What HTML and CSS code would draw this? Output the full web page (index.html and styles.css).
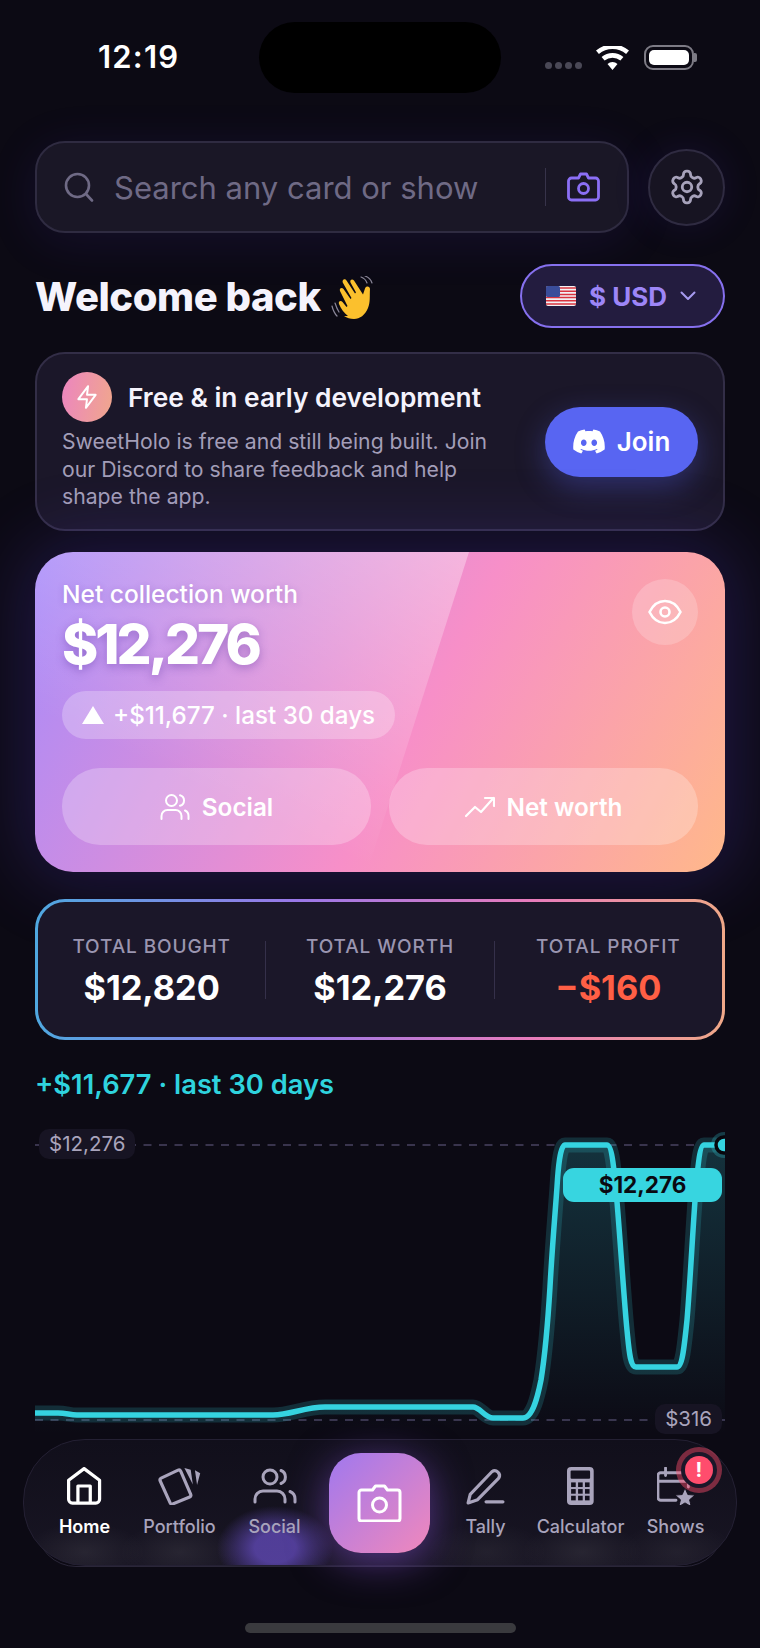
FILE: index.html
```html
<!DOCTYPE html>
<html lang="en">
<head>
    <meta charset="UTF-8">
    <title>SweetHolo</title>
    <link rel="stylesheet" href="styles.css">
</head>
<body>
<div class="page">

    <div class="status">
        <div class="time">12:19</div>
        <div class="island"></div>
        <div class="status-icons">
            <div class="dots"><i></i><i></i><i></i><i></i></div>
            <svg class="wifi" viewBox="0 0 33 24"><path d="M16.5 24l-5-6a7.5 7.5 0 0 1 10 0zM8.6 14.6l-3-3.6a17 17 0 0 1 21.8 0l-3 3.6a12.5 12.5 0 0 0-15.8 0zM2.9 8L0 4.5a25.5 25.5 0 0 1 33 0L30.100 8a21 21 0 0 0-27.200 0z" fill="#fff"/></svg>
            <div class="battery"><div class="battery-fill"></div></div>
        </div>
    </div>

    <div class="search-row">
        <div class="search">
            <svg class="search-icon" viewBox="0 0 30 30" fill="none" stroke="#6f6a85" stroke-width="2.600" stroke-linecap="round"><circle cx="13.500" cy="13.500" r="11.500"/><path d="M22 22l6 6.500"/></svg>
            <span class="search-text">Search any card or show</span>
            <span class="search-sep"></span>
            <svg class="search-cam" viewBox="0 0 34 30" fill="none" stroke="#8b6ff5" stroke-width="2.800" stroke-linejoin="round"><path d="M12 6l2-4h6l2 4h7a3 3 0 0 1 3 3v16a3 3 0 0 1-3 3H5a3 3 0 0 1-3-3V9a3 3 0 0 1 3-3z"/><circle cx="17" cy="16.500" r="5"/></svg>
        </div>
        <div class="settings">
            <svg viewBox="0 0 24 24" fill="none" stroke="#a7a2bb" stroke-width="1.800" stroke-linecap="round" stroke-linejoin="round"><path d="M12.220 2h-.44a2 2 0 0 0-2 2v.18a2 2 0 0 1-1 1.730l-.43.25a2 2 0 0 1-2 0l-.15-.08a2 2 0 0 0-2.730.73l-.22.38a2 2 0 0 0 .73 2.730l.15.1a2 2 0 0 1 1 1.720v.51a2 2 0 0 1-1 1.740l-.15.09a2 2 0 0 0-.73 2.730l.22.38a2 2 0 0 0 2.730.73l.15-.08a2 2 0 0 1 2 0l.43.25a2 2 0 0 1 1 1.730V20a2 2 0 0 0 2 2h.44a2 2 0 0 0 2-2v-.18a2 2 0 0 1 1-1.730l.43-.25a2 2 0 0 1 2 0l.15.08a2 2 0 0 0 2.730-.73l.22-.39a2 2 0 0 0-.73-2.730l-.15-.08a2 2 0 0 1-1-1.740v-.5a2 2 0 0 1 1-1.740l.15-.09a2 2 0 0 0 .73-2.730l-.22-.38a2 2 0 0 0-2.730-.73l-.15.08a2 2 0 0 1-2 0l-.43-.25a2 2 0 0 1-1-1.730V4a2 2 0 0 0-2-2z"/><circle cx="12" cy="12" r="3"/></svg>
        </div>
    </div>

    <div class="welcome-row">
        <div class="welcome">
            <h1>Welcome back</h1>
            <svg class="wave" viewBox="0 0 46 44" fill="none">
                <path d="M1 30c1 4 2 7 5 10M4 27c1 3 2 6 4 9M30 1c3 1 5 3 6 6M34 0c3 1 6 4 7 7" stroke="#8a8698" stroke-width="1.200" stroke-linecap="round"/>
                <path d="M17 40c-4-3-7-7-9-12-1-3 2-4 3.500-2l4 5 1-1L9 15c-1-3 2-4 3.500-2l7 10 1-1L12 7c-1.500-3 2-5 3.500-2.500l8.500 13 1-1-5.500-10c-1-3 2-4 3.500-2l9 14 2-6c1-3 5-2.500 5 .5-.5 7 .5 13-2 19-3 7-8 11-14 11-4 0-7-1-10-3z" fill="#fbc02d"/>
            </svg>
        </div>
        <div class="currency">
            <svg class="flag" viewBox="0 0 30 22"><rect y="1" width="30" height="20" rx="2" fill="#f3f1f4"/><path d="M0 3h30M0 6.200h30M0 9.400h30M0 12.600h30M0 15.800h30M0 19h30" stroke="#d8343f" stroke-width="1.500"/><rect y="1" width="14" height="11" rx="1.500" fill="#3a4d9a"/></svg>
            <span>$ USD</span>
            <svg class="chev" viewBox="0 0 16 10" fill="none" stroke="#a79bf0" stroke-width="2" stroke-linecap="round" stroke-linejoin="round"><path d="M1.500 1.500L8 8l6.500-6.500"/></svg>
        </div>
    </div>

    <div class="promo">
        <div class="promo-left">
            <div class="promo-head">
                <div class="promo-icon">
                    <svg viewBox="0 0 24 24" fill="none" stroke="#fff" stroke-width="1.800" stroke-linejoin="round"><path d="M13 2 4 14h8l-1 8 9-12h-8l1-8z"/></svg>
                </div>
                <h2>Free &amp; in early development</h2>
            </div>
            <p>SweetHolo is free and still being built. Join our Discord to share feedback and help shape the app.</p>
        </div>
        <div class="join">
            <svg viewBox="0 2.500 24 19" fill="#fff"><path d="M20.317 4.370a19.791 19.791 0 0 0-4.885-1.515.074.074 0 0 0-.079.037c-.211.375-.445.865-.608 1.250-1.845-.276-3.680-.276-5.487 0-.164-.393-.406-.874-.618-1.250a.077.077 0 0 0-.079-.037 19.736 19.736 0 0 0-4.885 1.515.070.070 0 0 0-.032.028C.533 9.046-.319 13.580.099 18.058a.082.082 0 0 0 .031.056c2.053 1.508 4.041 2.423 5.993 3.029a.078.078 0 0 0 .084-.028c.462-.630.873-1.295 1.226-1.994a.076.076 0 0 0-.042-.106c-.653-.248-1.274-.550-1.872-.892a.077.077 0 0 1-.008-.128c.126-.094.252-.192.372-.291a.074.074 0 0 1 .078-.011c3.928 1.793 8.180 1.793 12.061 0a.074.074 0 0 1 .079.010c.120.099.246.198.373.292a.077.077 0 0 1-.007.128 12.299 12.299 0 0 1-1.873.891.077.077 0 0 0-.041.107c.360.698.772 1.363 1.225 1.993a.076.076 0 0 0 .084.029c1.961-.607 3.950-1.522 6.002-3.029a.077.077 0 0 0 .031-.055c.500-5.177-.838-9.674-3.548-13.660a.061.061 0 0 0-.031-.029zM8.020 15.331c-1.183 0-2.157-1.086-2.157-2.419 0-1.333.956-2.419 2.157-2.419 1.211 0 2.176 1.095 2.157 2.419 0 1.333-.956 2.419-2.157 2.419zm7.975 0c-1.183 0-2.157-1.086-2.157-2.419 0-1.333.955-2.419 2.157-2.419 1.211 0 2.176 1.095 2.157 2.419 0 1.333-.946 2.419-2.157 2.419z"/></svg>
            <span>Join</span>
        </div>
    </div>

    <div class="hero">
        <div class="hero-sheen"></div>
        <div class="hero-top">
            <div>
                <div class="hero-label">Net collection worth</div>
                <div class="hero-amount">$12,276</div>
            </div>
            <div class="eye">
                <svg viewBox="0 0 34 26" fill="none" stroke="#fff" stroke-width="2.600" stroke-linejoin="round"><path d="M1.500 13C5 6 10 2 17 2s12 4 15.500 11C29 20 24 24 17 24S5 20 1.500 13z"/><circle cx="17" cy="13" r="4.500"/></svg>
            </div>
        </div>
        <div class="hero-pill"><i class="tri"></i>+$11,677 · last 30 days</div>
        <div class="hero-btns">
            <div class="hero-btn">
                <svg viewBox="0 0 30 26" fill="none" stroke="#fff" stroke-width="2" stroke-linecap="round"><path d="M1.500 25v-3a6 6 0 0 1 6-6h8a6 6 0 0 1 6 6v3"/><circle cx="11.500" cy="6.500" r="5.500"/><path d="M28.500 25v-3a6 6 0 0 0-3.500-5.500M20 1.200a5.500 5.500 0 0 1 0 10.600"/></svg>
                Social
            </div>
            <div class="hero-btn">
                <svg viewBox="0 0 30 22" fill="none" stroke="#fff" stroke-width="2.200" stroke-linecap="round" stroke-linejoin="round"><path d="M1 20l9-9 6 5L28.500 2M20 2h9v8"/></svg>
                Net worth
            </div>
        </div>
    </div>

    <div class="stats">
        <div class="stat">
            <div class="stat-label">TOTAL BOUGHT</div>
            <div class="stat-value">$12,820</div>
        </div>
        <div class="stat">
            <div class="stat-label">TOTAL WORTH</div>
            <div class="stat-value">$12,276</div>
        </div>
        <div class="stat">
            <div class="stat-label">TOTAL PROFIT</div>
            <div class="stat-value loss">−$160</div>
        </div>
    </div>

    <div class="change">+$11,677 · last 30 days</div>

    <div class="chart">
        <svg viewBox="35 1125 690 315" width="690" height="315">
            <defs>
                <linearGradient id="areaFill" x1="0" y1="0" x2="0" y2="1">
                    <stop offset="0" stop-color="#35d3e0" stop-opacity="0.2"/>
                    <stop offset="1" stop-color="#35d3e0" stop-opacity="0"/>
                </linearGradient>
            </defs>
            <path d="M35 1145H725M35 1420H725" stroke="#39344d" stroke-width="2" stroke-dasharray="8 7.500" fill="none"/>
            <path fill="url(#areaFill)" d="M35 1413H58C66 1413 70 1415 77 1415H273C290 1415 305 1407 325 1407H473C480 1407 485 1418 493 1418H523C533 1418 538 1395 541 1380C545 1355 548 1320 550 1287C552 1250 555 1215 557 1187C558 1170 560 1145 565 1145H607C612 1145 614 1170 616 1190C620 1235 624 1300 627 1330C629 1350 630 1367 636 1367H677C682 1367 684 1350 687 1320C690 1285 693 1225 696 1187C698 1165 700 1145 704 1145H725V1435H35Z"/>
            <path fill="none" stroke="#35d3e0" stroke-opacity="0.18" stroke-width="15" stroke-linejoin="round" d="M35 1413H58C66 1413 70 1415 77 1415H273C290 1415 305 1407 325 1407H473C480 1407 485 1418 493 1418H523C533 1418 538 1395 541 1380C545 1355 548 1320 550 1287C552 1250 555 1215 557 1187C558 1170 560 1145 565 1145H607C612 1145 614 1170 616 1190C620 1235 624 1300 627 1330C629 1350 630 1367 636 1367H677C682 1367 684 1350 687 1320C690 1285 693 1225 696 1187C698 1165 700 1145 704 1145H725"/>
            <path fill="none" stroke="#35d3e0" stroke-width="5.500" stroke-linejoin="round" d="M35 1413H58C66 1413 70 1415 77 1415H273C290 1415 305 1407 325 1407H473C480 1407 485 1418 493 1418H523C533 1418 538 1395 541 1380C545 1355 548 1320 550 1287C552 1250 555 1215 557 1187C558 1170 560 1145 565 1145H607C612 1145 614 1170 616 1190C620 1235 624 1300 627 1330C629 1350 630 1367 636 1367H677C682 1367 684 1350 687 1320C690 1285 693 1225 696 1187C698 1165 700 1145 704 1145H725"/>
            <circle cx="724" cy="1145" r="13" fill="#35d3e0" fill-opacity="0.25"/>
            <circle cx="724" cy="1145" r="8" fill="#35d3e0" stroke="#07060c" stroke-width="3.500"/>
        </svg>
        <div class="tag tag-top">$12,276</div>
        <div class="tag tag-bottom">$316</div>
        <div class="tooltip">$12,276</div>
    </div>
</div>

<div class="nav">
    <div class="nav-item active">
        <svg viewBox="0 0 36 40" fill="none" stroke="#fff" stroke-width="3.400" stroke-linejoin="round"><path d="M1.700 14L18 1.700 34.300 14v20a4 4 0 0 1-4 4h-24.600a4 4 0 0 1-4-4z"/><path d="M11.500 38V20h13v18"/></svg>
        <span>Home</span>
    </div>
    <div class="nav-item">
        <svg viewBox="0 0 40 36" fill="none"><path d="M3 10.500L19 3a2 2 0 0 1 2.500 1L31 26a2 2 0 0 1-1 2.500L14 35a2 2 0 0 1-2.500-1L2 13a2 2 0 0 1 1-2.500z" stroke="#a9a4bc" stroke-width="3" stroke-linejoin="round"/><path d="M25 1l6 1.500 2 14zM35 3l5 3-3 11z" fill="#a9a4bc"/></svg>
        <span>Portfolio</span>
    </div>
    <div class="nav-item">
        <svg viewBox="0 0 44 36" fill="none" stroke="#a9a4bc" stroke-width="3" stroke-linecap="round"><path d="M2 34v-3a8 8 0 0 1 8-8h14a8 8 0 0 1 8 8v3"/><circle cx="17" cy="9" r="7"/><path d="M42 34v-3a8 8 0 0 0-5-7.500M28 2.500a7 7 0 0 1 0 13"/></svg>
        <span>Social</span>
    </div>
    <div class="nav-cam">
        <svg viewBox="0 0 44 38" fill="none" stroke="#fff" stroke-width="3" stroke-linejoin="round"><path d="M15 6l3-4h9l3 4h10a2.500 2.500 0 0 1 2.500 2.500v26A2.500 2.500 0 0 1 40 37H4a2.500 2.500 0 0 1-2.500-2.500v-26A2.500 2.500 0 0 1 4 6z"/><circle cx="22" cy="21" r="7"/></svg>
    </div>
    <div class="nav-item">
        <svg viewBox="0 0 37 36" fill="none" stroke="#a9a4bc" stroke-width="3" stroke-linecap="round" stroke-linejoin="round"><path d="M2 34l2-8L24.500 4.500a4.500 4.500 0 0 1 6.500 6L11 31z"/><path d="M19 33h16"/></svg>
        <span>Tally</span>
    </div>
    <div class="nav-item">
        <svg viewBox="0 0 26 37"><rect width="26" height="37" rx="4" fill="#a9a4bc"/><rect x="3.500" y="3.500" width="19" height="8" rx="1" fill="#14111e"/><g fill="#14111e"><rect x="4" y="15" width="4.500" height="4.500"/><rect x="10.800" y="15" width="4.500" height="4.500"/><rect x="17.500" y="15" width="4.500" height="4.500"/><rect x="4" y="21.500" width="4.500" height="4.500"/><rect x="10.800" y="21.500" width="4.500" height="4.500"/><rect x="17.500" y="21.500" width="4.500" height="4.500"/><rect x="4" y="28" width="4.500" height="4.500"/><rect x="10.800" y="28" width="4.500" height="4.500"/><rect x="17.500" y="28" width="4.500" height="4.500"/></g></svg>
        <span>Calculator</span>
    </div>
    <div class="nav-item">
        <svg viewBox="0 0 40 40" fill="none"><path d="M20 35H4a3 3 0 0 1-3-3V9a3 3 0 0 1 3-3h26a3 3 0 0 1 3 3v12M1 15h32M9 1v8" stroke="#a9a4bc" stroke-width="3" stroke-linecap="round"/><path d="M29.500 22l3 7 7.500.6-5.700 4.900 1.800 7.300-6.600-4-6.600 4 1.800-7.300-5.700-4.900 7.500-.6z" fill="#a9a4bc" stroke="#14111e" stroke-width="1"/></svg>
        <span>Shows</span>
    </div>
    <div class="badge">!</div>
</div>

<div class="home-bar"></div>
</body>
</html>
```

FILE: styles.css
```css
* {
    box-sizing: border-box;
}

body {
    margin: 0;
    width: 760px;
    height: 1648px;
    overflow: hidden;
    position: relative;
    background: #0c0a14;
    font-family: Inter, 'Noto Sans', sans-serif;
    color: #fff;
}

.page {
    padding: 0 35px;
}

/* status bar */
.status {
    display: flex;
    height: 141px;
    padding-top: 22px;
}

.time {
    width: 224px;
    padding: 17px 0 0 63px;
    font-size: 31px;
    font-weight: 600;
    line-height: 36px;
    letter-spacing: 1.200px;
}

.island {
    width: 242px;
    height: 71px;
    background: #000;
    border-radius: 36px;
}

.status-icons {
    display: flex;
    align-items: center;
    height: 71px;
    margin-left: 44px;
}

.dots {
    display: flex;
    gap: 3px;
    margin-top: 15px;
}

.dots i {
    width: 7px;
    height: 7px;
    border-radius: 50%;
    background: #4a4856;
}

.wifi {
    width: 33px;
    height: 24px;
    margin: 0 15px 0 14px;
}

.battery {
    position: relative;
    width: 50px;
    height: 25px;
    padding: 3px;
    border: 2px solid #7d7b85;
    border-radius: 9px;
}

.battery::after {
    content: "";
    position: absolute;
    right: -5px;
    top: 6px;
    width: 3px;
    height: 9px;
    border-radius: 0 2px 2px 0;
    background: #7d7b85;
}

.battery-fill {
    height: 100%;
    background: #fff;
    border-radius: 5px;
}

/* search */
.search-row {
    display: flex;
    align-items: center;
    gap: 19px;
}

.search {
    display: flex;
    align-items: center;
    width: 594px;
    height: 92px;
    padding: 0 26px 0 27px;
    background: #1a1726;
    border: 2px solid #2f2b41;
    border-radius: 30px;
    box-shadow: 0 8px 50px rgba(90, 60, 220, 0.12);
}

.search-icon {
    width: 30px;
    height: 30px;
}

.search-text {
    flex: 1;
    margin-left: 20px;
    font-size: 31px;
    color: #6f6a85;
}

.search-sep {
    width: 1px;
    height: 38px;
    background: #37334a;
}

.search-cam {
    width: 35px;
    height: 30px;
    margin-left: 20px;
}

.settings {
    display: flex;
    align-items: center;
    justify-content: center;
    width: 77px;
    height: 77px;
    background: #171422;
    border: 2px solid #2f2b41;
    border-radius: 50%;
    box-shadow: 0 0 40px rgba(90, 60, 220, 0.12);
}

.settings svg {
    width: 38px;
    height: 38px;
}

/* welcome */
.welcome-row {
    display: flex;
    justify-content: space-between;
    align-items: center;
    margin-top: 31px;
}

.welcome {
    display: flex;
    align-items: center;
    gap: 10px;
}

h1 {
    margin: 0;
    font-size: 40px;
    font-weight: 800;
    letter-spacing: -0.450px;
    color: #f5f3fc;
}

.wave {
    width: 46px;
    height: 44px;
    margin-top: 3px;
}

.currency {
    display: flex;
    align-items: center;
    width: 205px;
    height: 64px;
    padding-left: 24px;
    font-size: 26px;
    font-weight: 700;
    color: #9d86f7;
    background: #231c3f;
    border: 2px solid #8670ee;
    border-radius: 32px;
}

.flag {
    width: 30px;
    height: 22px;
    margin-right: 13px;
}

.chev {
    width: 16px;
    height: 10px;
    margin-left: 13px;
}

/* promo */
.promo {
    display: flex;
    align-items: center;
    justify-content: space-between;
    height: 179px;
    margin-top: 24px;
    padding: 0 25px;
    background: #1b1729;
    border: 2px solid #332e47;
    border-radius: 30px;
}

.promo-head {
    display: flex;
    align-items: center;
    gap: 16px;
}

.promo-icon {
    display: flex;
    align-items: center;
    justify-content: center;
    width: 50px;
    height: 50px;
    border-radius: 50%;
    background: linear-gradient(100deg, #ec85c0, #f0a78c);
}

.promo-icon svg {
    width: 26px;
    height: 26px;
}

h2 {
    margin: 0;
    font-size: 26.300px;
    font-weight: 600;
    color: #f5f3fc;
}

.promo p {
    width: 440px;
    margin: 6px 0 0;
    font-size: 21.200px;
    line-height: 27.500px;
    color: #a39eb8;
}

.join {
    display: flex;
    align-items: center;
    justify-content: center;
    gap: 12px;
    width: 153px;
    height: 70px;
    font-size: 26px;
    font-weight: 600;
    background: #5865f2;
    border-radius: 35px;
    box-shadow: 0 10px 30px rgba(88, 101, 242, 0.35);
}

.join svg {
    width: 32px;
    height: 25px;
}

/* hero */
.hero {
    position: relative;
    height: 320px;
    margin-top: 21px;
    padding: 27px;
    overflow: hidden;
    border-radius: 38px;
    background: linear-gradient(118deg, #a78bfa 0%, #f78fc8 55%, #ffb88a 100%);
    box-shadow: 0 0 70px 12px rgba(100, 70, 230, 0.22);
}

.hero-sheen {
    position: absolute;
    inset: 0;
    clip-path: polygon(0 0, 434px 0, 332px 320px, 0 320px);
    background: linear-gradient(25deg, rgba(255, 255, 255, 0) 25%, rgba(255, 255, 255, 0.4) 90%);
}

.hero-top {
    position: relative;
    display: flex;
    justify-content: space-between;
}

.hero-label {
    font-size: 24.500px;
    font-weight: 500;
    line-height: 30px;
    text-shadow: 0 1px 6px rgba(90, 50, 160, 0.25);
}

.hero-amount {
    margin-top: 2px;
    font-size: 55px;
    font-weight: 800;
    line-height: 66px;
    letter-spacing: -3px;
    text-shadow: 0 3px 10px rgba(90, 50, 160, 0.4);
}

.eye {
    display: flex;
    align-items: center;
    justify-content: center;
    width: 66px;
    height: 66px;
    border-radius: 50%;
    background: rgba(255, 255, 255, 0.2);
}

.eye svg {
    width: 34px;
    height: 26px;
}

.hero-pill {
    position: relative;
    display: inline-flex;
    align-items: center;
    gap: 9px;
    height: 48px;
    margin-top: 14px;
    padding: 0 20px;
    font-size: 24.200px;
    font-weight: 500;
    background: rgba(255, 255, 255, 0.25);
    border-radius: 24px;
}

.tri {
    width: 0;
    height: 0;
    border-left: 11.500px solid transparent;
    border-right: 11.500px solid transparent;
    border-bottom: 18px solid #fff;
}

.hero-btns {
    position: relative;
    display: flex;
    gap: 18px;
    margin-top: 29px;
}

.hero-btn {
    flex: 1;
    display: flex;
    align-items: center;
    justify-content: center;
    gap: 12px;
    height: 77px;
    font-size: 24.300px;
    font-weight: 600;
    background: rgba(255, 255, 255, 0.25);
    border-radius: 38px;
}

.hero-btn svg {
    width: 30px;
    height: 26px;
}

/* totals */
.stats {
    position: relative;
    display: flex;
    align-items: center;
    height: 141px;
    margin-top: 27px;
    border: 3px solid transparent;
    border-radius: 30px;
    background: linear-gradient(#1b1729, #1b1729) padding-box,
        linear-gradient(90deg, #4fa8e0, #9a78e8 38%, #e87cbc 72%, #f0a888) border-box;
}

.stat {
    flex: 1;
    height: 58px;
    text-align: center;
    border-left: 1.500px solid #35304a;
}

.stat:first-child {
    border-left: none;
}

.stat-label {
    margin-top: -6px;
    font-size: 19px;
    font-weight: 500;
    line-height: 24px;
    letter-spacing: 0.900px;
    color: #9a95b0;
}

.stat-value {
    margin-top: 9px;
    font-size: 34.300px;
    font-weight: 700;
    line-height: 40px;
    color: #fff;
}

.stat-value.loss {
    color: #ff5f45;
}

.change {
    margin-top: 29px;
    font-size: 27.300px;
    font-weight: 600;
    line-height: 32px;
    color: #2fd3de;
}

/* chart */
.chart {
    position: relative;
    height: 315px;
    margin-top: 24px;
}

.chart svg {
    display: block;
}

.tag {
    position: absolute;
    padding: 0 10px;
    font-size: 20.500px;
    line-height: 30px;
    color: #a9a4bc;
    background: #171423;
    border-radius: 10px;
}

.tag-top {
    left: 4px;
    top: 4px;
}

.tag-bottom {
    right: 3px;
    top: 279px;
}

.tooltip {
    position: absolute;
    left: 528px;
    top: 43px;
    width: 159px;
    height: 34px;
    font-size: 22.500px;
    font-weight: 700;
    line-height: 34px;
    text-align: center;
    color: #0a0a12;
    background: #37d5e0;
    border-radius: 11px;
}

/* tab bar, floats over the chart */
.nav {
    position: absolute;
    left: 23px;
    top: 1439px;
    display: flex;
    width: 714px;
    height: 127px;
    padding: 12.500px 0 0 13px;
    background:
        radial-gradient(ellipse 58px 42px at 251px 108px, rgba(120, 90, 230, 0.6) 35%, transparent),
        radial-gradient(ellipse 60px 30px at 61px 112px, rgba(255, 255, 255, 0.07), transparent),
        radial-gradient(ellipse 60px 30px at 156px 112px, rgba(255, 255, 255, 0.07), transparent),
        radial-gradient(ellipse 60px 30px at 463px 112px, rgba(255, 255, 255, 0.05), transparent),
        radial-gradient(ellipse 60px 30px at 558px 112px, rgba(255, 255, 255, 0.07), transparent),
        radial-gradient(ellipse 60px 30px at 653px 112px, rgba(255, 255, 255, 0.05), transparent),
        linear-gradient(#110f1b, #181523);
    border: 1.500px solid #242033;
    border-radius: 62px;
}

.nav::before {
    content: "";
    position: absolute;
    left: 12px;
    right: 12px;
    top: 20px;
    bottom: -1.500px;
    z-index: -1;
    border: 1.500px solid #2a2638;
    border-radius: 40px;
}

.nav-item {
    display: flex;
    flex-direction: column;
    align-items: center;
    width: 95px;
    padding-top: 14px;
    font-size: 18px;
    font-weight: 500;
    color: #a9a4bc;
}

.nav-item svg {
    height: 38px;
    max-width: 44px;
}

.nav-item span {
    margin-top: 11px;
    line-height: 22px;
}

.nav-item.active {
    font-weight: 600;
    color: #fff;
}

.nav-cam {
    display: flex;
    align-items: center;
    justify-content: center;
    width: 101px;
    height: 100px;
    margin: 0 8px 0 7px;
    background: linear-gradient(135deg, #a078ee, #f088bc);
    border-radius: 32px;
    box-shadow: 0 8px 40px rgba(150, 90, 240, 0.5);
}

.nav-cam svg {
    width: 45px;
    height: 38px;
}

.badge {
    position: absolute;
    left: 661px;
    top: 16px;
    width: 28px;
    height: 28px;
    font-size: 20px;
    font-weight: 700;
    line-height: 28px;
    text-align: center;
    background: #ff4d6d;
    border-radius: 50%;
    box-shadow: 0 0 0 4px #1b1729, 0 0 0 9px rgba(255, 77, 109, 0.45);
}

.home-bar {
    position: absolute;
    left: 245px;
    top: 1623px;
    width: 271px;
    height: 10px;
    background: #3a3a3e;
    border-radius: 5px;
}
```
